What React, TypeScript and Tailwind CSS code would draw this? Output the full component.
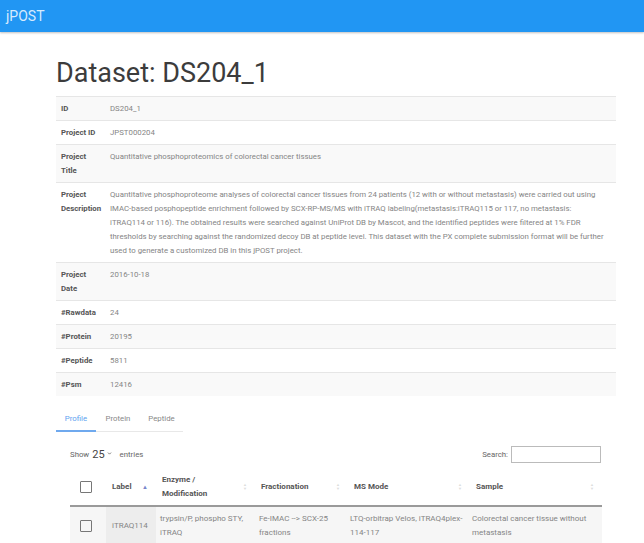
import { ChevronDown } from "lucide-react";

type Field = {
  label: string;
  value: string;
};

const fields: Field[] = [
  { label: "ID", value: "DS204_1" },
  { label: "Project ID", value: "JPST000204" },
  {
    label: "Project Title",
    value: "Quantitative phosphoproteomics of colorectal cancer tissues",
  },
  {
    label: "Project Description",
    value:
      "Quantitative phosphoproteome analyses of colorectal cancer tissues from 24 patients (12 with or without metastasis) were carried out using IMAC-based posphopeptide enrichment followed by SCX-RP-MS/MS with iTRAQ labeling(metastasis:iTRAQ115 or 117, no metastasis: iTRAQ114 or 116). The obtained results were searched against UniProt DB by Mascot, and the identified peptides were filtered at 1% FDR thresholds by searching against the randomized decoy DB at peptide level. This dataset with the PX complete submission format will be further used to generate a customized DB in this jPOST project.",
  },
  { label: "Project Date", value: "2016-10-18" },
  { label: "#Rawdata", value: "24" },
  { label: "#Protein", value: "20195" },
  { label: "#Peptide", value: "5811" },
  { label: "#Psm", value: "12416" },
];

const columns = [
  { name: "Label", width: "w-[50px]", active: true },
  { name: "Enzyme / Modification", width: "w-[99px]", active: false },
  { name: "Fractionation", width: "w-[93px]", active: false },
  { name: "MS Mode", width: "w-[122px]", active: false },
  { name: "Sample", width: "w-[132px]", active: false },
];

function SortIcon({ active }: { active: boolean }) {
  if (active) {
    return <span className="text-[6px] leading-none text-[#7986cb]">▲</span>;
  }
  return (
    <span className="flex flex-col text-[4px] leading-[4px] text-[#dddddd]">
      <span>▲</span>
      <span>▼</span>
    </span>
  );
}

function Checkbox() {
  return (
    <span className="block h-[12px] w-[12px] rounded-[1px] border border-[#777]" />
  );
}

export default function App() {
  return (
    <div
      className="min-h-screen bg-white text-[7.8px] leading-[14px] text-[#858585]"
      style={{ fontFamily: "Roboto, 'Noto Sans', sans-serif" }}
    >
      <header className="flex h-[32px] items-center bg-[#2196f3] px-[6px] shadow-[0_1px_2px_rgba(0,0,0,0.25)]">
        <span className="text-[14px] text-[#d6ebfd]">jPOST</span>
      </header>

      <main className="mx-[56px] w-[560px]">
        <h1 className="pt-[26px] pb-[7px] text-[27px] leading-[31px] text-[#3c3c3c]">
          Dataset: DS204_1
        </h1>

        <table className="w-full table-fixed border-collapse">
          <colgroup>
            <col className="w-[54px]" />
            <col />
          </colgroup>
          <tbody>
            {fields.map((field, index) => (
              <tr
                key={field.label}
                className={`border-t border-[#e6e6e6] ${
                  index % 2 === 0 ? "bg-[#f9f9f9]" : "bg-white"
                }`}
              >
                <th className="py-[4.5px] pl-[5px] pr-[10px] text-left align-top font-bold text-[#555]">
                  {field.label}
                </th>
                <td className="py-[4.5px] pr-[10px] align-top">
                  {field.value}
                </td>
              </tr>
            ))}
          </tbody>
        </table>

        <nav className="mt-[12px] flex w-[127px] border-b border-[#e8e8e8]">
          <span className="-mb-px w-[40px] border-b-2 border-[#6fa9ee] py-[4px] text-center text-[#5d9ff0]">
            Profile
          </span>
          <span className="w-[44px] py-[4px] text-center text-[#888]">
            Protein
          </span>
          <span className="w-[43px] py-[4px] text-center text-[#888]">
            Peptide
          </span>
        </nav>

        <div className="mt-[14px] flex items-center justify-between pl-[14px] pr-[15px]">
          <div className="flex items-center gap-[2px] text-[#666]">
            <span>Show</span>
            <span className="ml-[1px] text-[11px] leading-[14px] text-[#444]">
              25
            </span>
            <ChevronDown size={5} strokeWidth={4} className="mb-[3px]" />
            <span className="ml-[6px]">entries</span>
          </div>
          <div className="flex items-center gap-[3px] text-[#666]">
            <span>Search:</span>
            <span className="block h-[17px] w-[90px] border border-[#bbb]" />
          </div>
        </div>

        <table className="mt-[6px] ml-[14px] w-[532px] table-fixed border-collapse text-[8px]">
          <colgroup>
            <col className="w-[36px]" />
            {columns.map((col) => (
              <col key={col.name} className={col.width} />
            ))}
          </colgroup>
          <thead>
            <tr className="border-b-2 border-[#9a9a9a]">
              <th className="py-[4px] pl-[10px] align-middle">
                <Checkbox />
              </th>
              {columns.map((col) => (
                <th
                  key={col.name}
                  className="py-[4px] pl-[6px] pr-[8px] text-left align-middle font-bold text-[#555]"
                >
                  <div className="flex items-center justify-between gap-[4px]">
                    <span>{col.name}</span>
                    <SortIcon active={col.active} />
                  </div>
                </th>
              ))}
            </tr>
          </thead>
          <tbody>
            <tr className="bg-[#f6f6f6]">
              <td className="py-[5px] pl-[10px] align-middle">
                <Checkbox />
              </td>
              <td className="bg-[#ededed] py-[5px] pl-[6px] align-middle">
                iTRAQ114
              </td>
              <td className="py-[5px] pl-[4px] pr-[4px] align-top">
                trypsin/P, phospho STY, iTRAQ
              </td>
              <td className="py-[5px] pl-[4px] pr-[4px] align-top">
                Fe-IMAC --&gt; SCX-25 fractions
              </td>
              <td className="py-[5px] pl-[2px] pr-[4px] align-top">
                LTQ-orbitrap Velos, iTRAQ4plex-114-117
              </td>
              <td className="py-[5px] pl-[2px] pr-[8px] align-top">
                Colorectal cancer tissue without metastasis
              </td>
            </tr>
          </tbody>
        </table>
      </main>
    </div>
  );
}
